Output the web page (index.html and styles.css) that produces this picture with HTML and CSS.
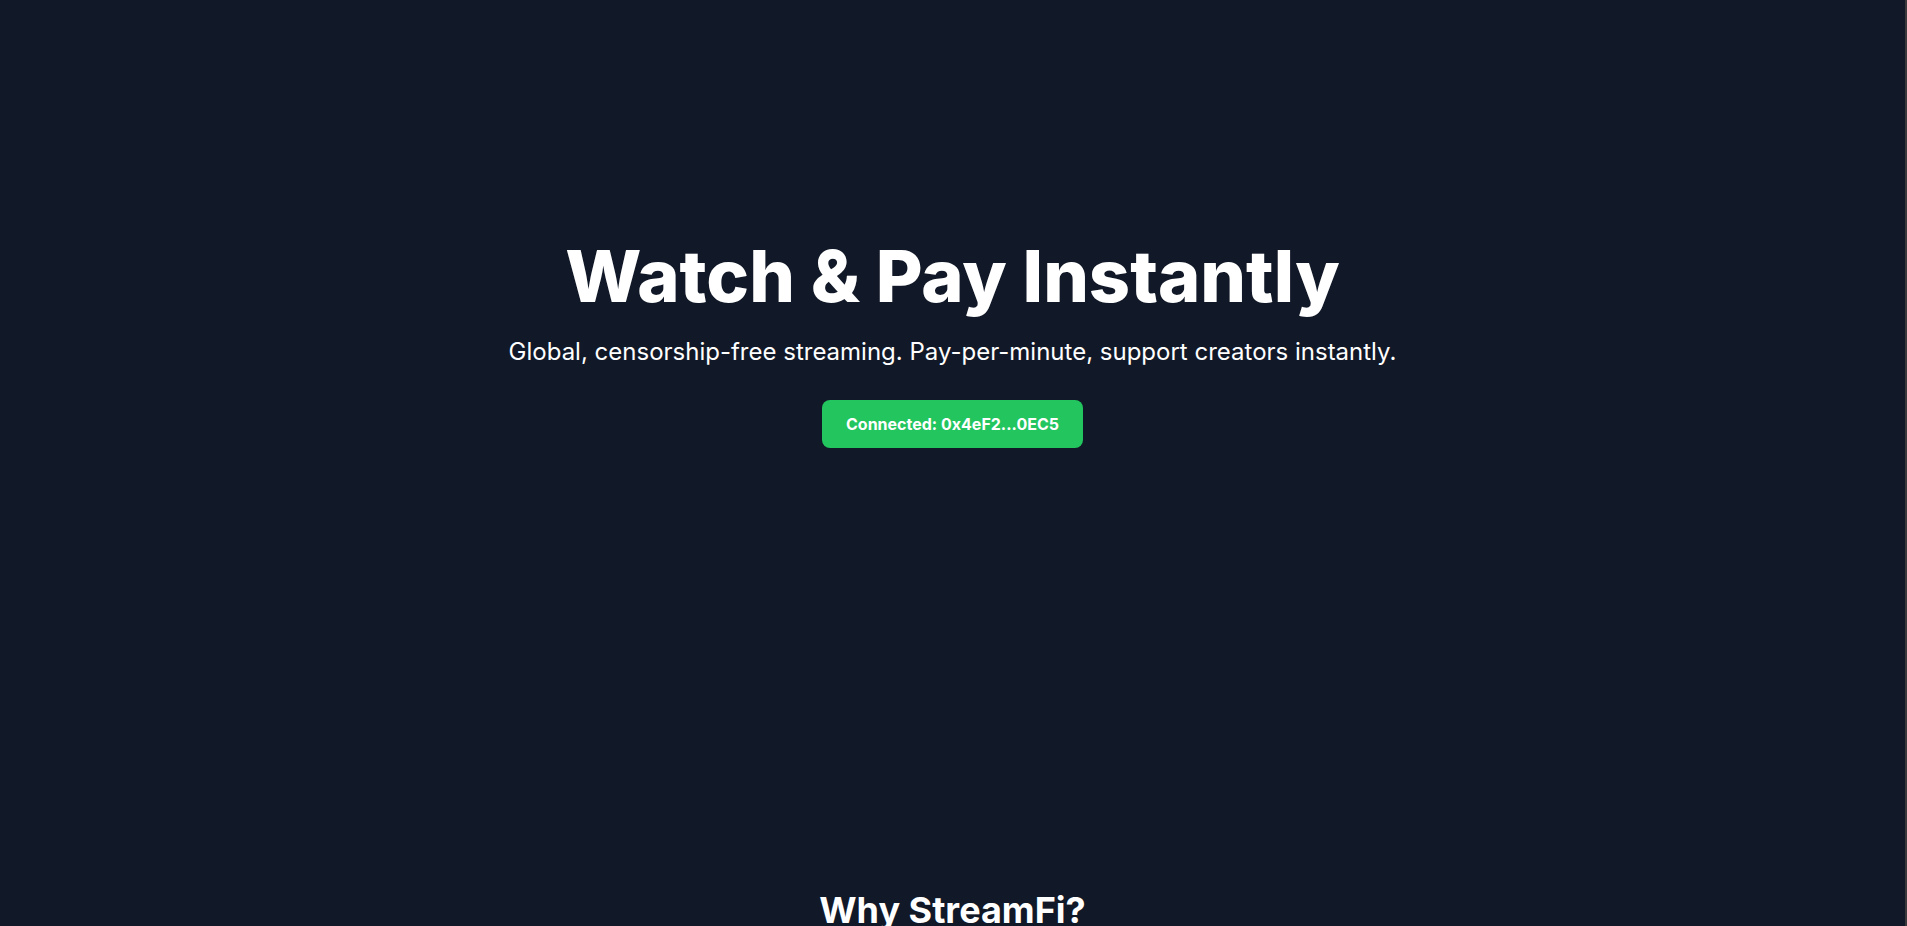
FILE: index.html
```html
<!DOCTYPE html>
<html lang="en">
<head>
<meta charset="utf-8">
<title>StreamFi</title>
<link rel="stylesheet" href="styles.css">
</head>
<body>
<main class="page">
  <section class="hero">
    <h1 class="hero-title">Watch &amp; Pay Instantly</h1>
    <p class="hero-sub">Global, censorship-free streaming. Pay-per-minute, support creators instantly.</p>
    <button class="connect-btn" type="button">Connected: 0x4eF2...0EC5</button>
  </section>
  <section class="features">
    <h2 class="features-title">Why StreamFi?</h2>
  </section>
</main>
</body>
</html>
```
FILE: styles.css
```css
html, body {
  margin: 0;
  padding: 0;
  background: #111827;
}
body {
  font-family: Inter, "Noto Sans", sans-serif;
  color: #ffffff;
  min-height: 100vh;
  border-right: 2px solid #3a3a3c;
}
.page {
  display: flex;
  flex-direction: column;
}
.hero {
  display: flex;
  flex-direction: column;
  align-items: center;
  text-align: center;
  padding: 240px 16px 378px;
}
.hero-title {
  margin: 0 0 24px;
  font-size: 72px;
  line-height: 1;
  font-weight: 800;
}
.hero-sub {
  margin: 0 0 32px;
  font-size: 24px;
  line-height: 32px;
  font-weight: 400;
}
.connect-btn {
  background: #22c55e;
  color: #ffffff;
  border: none;
  border-radius: 8px;
  padding: 12px 24px;
  font-family: inherit;
  font-size: 16px;
  line-height: 24px;
  font-weight: 700;
  cursor: pointer;
}
.features {
  padding: 64px 16px;
  text-align: center;
}
.features-title {
  margin: 0;
  font-size: 36px;
  line-height: 40px;
  font-weight: 700;
}
```
